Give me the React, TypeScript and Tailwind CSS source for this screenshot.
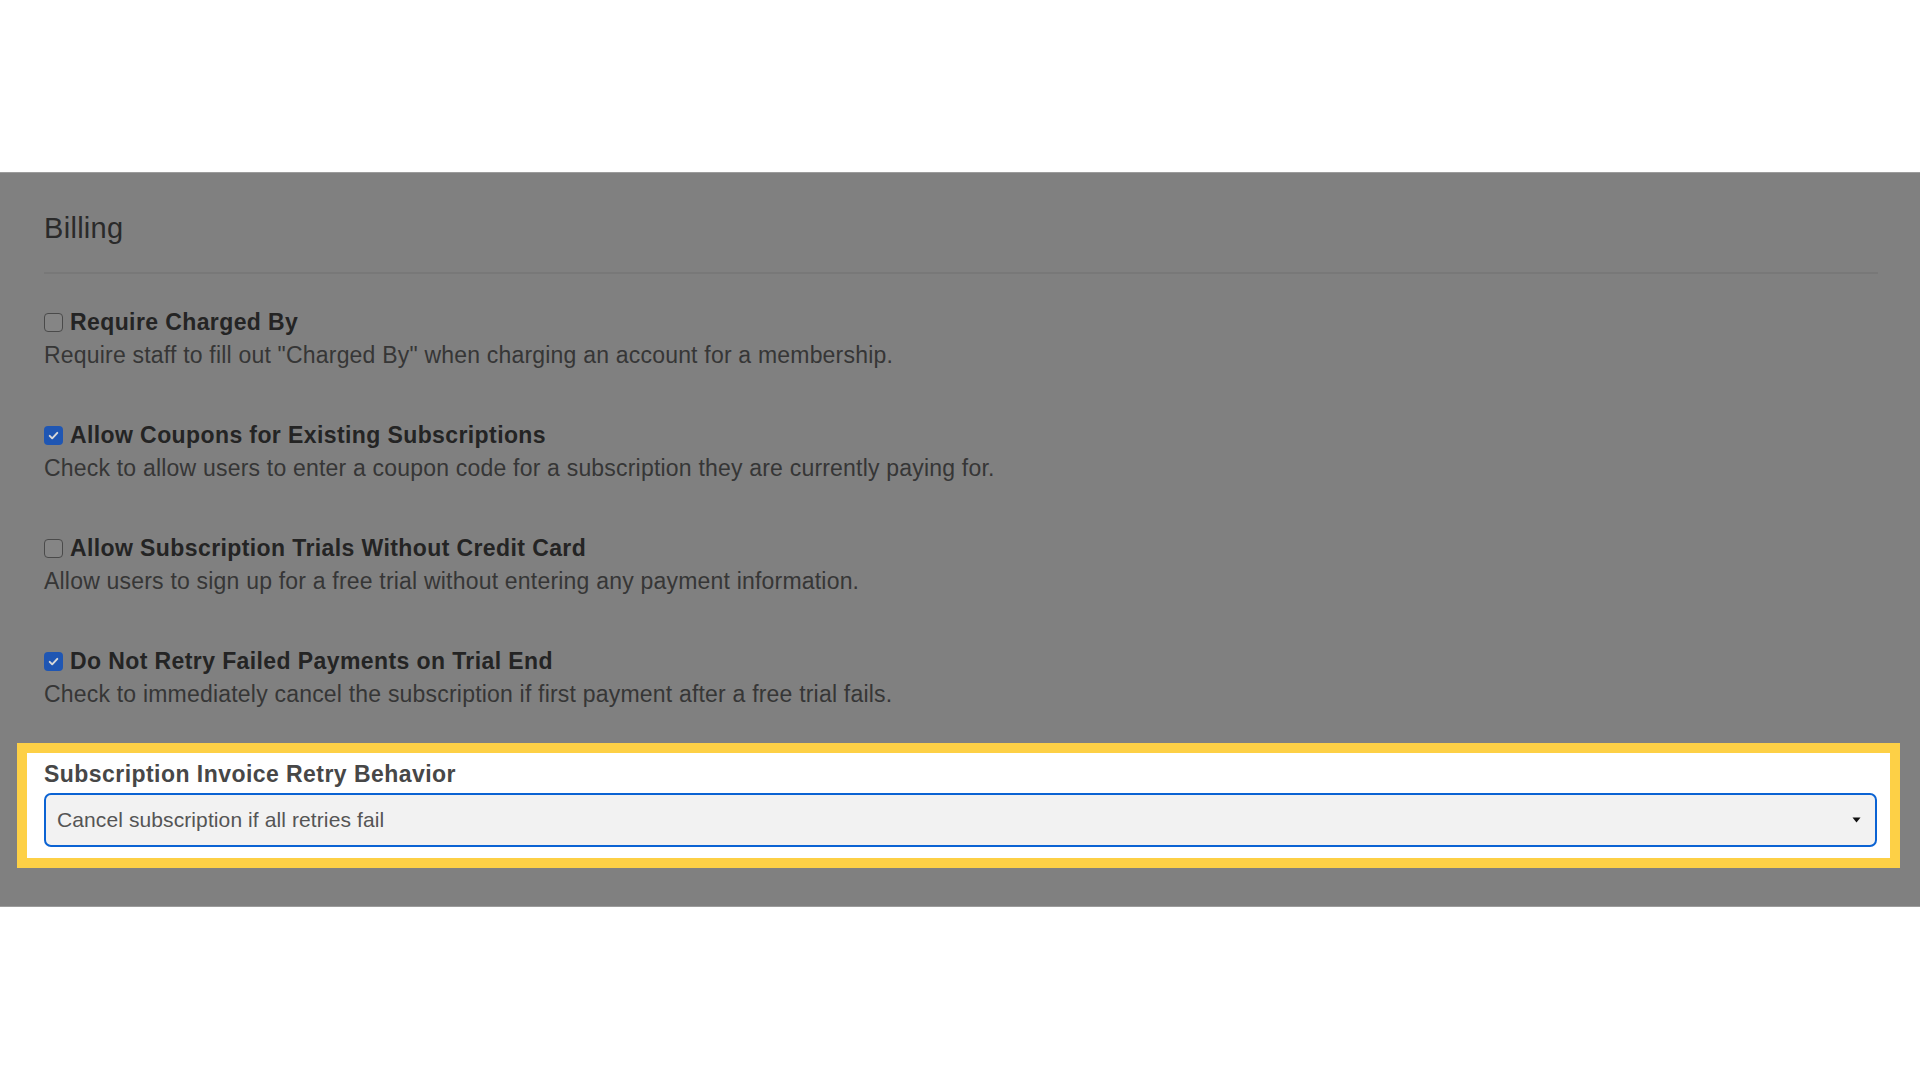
import React from "react";

interface BillingOption {
  title: string;
  desc: string;
  checked: boolean;
}

const options: BillingOption[] = [
  {
    title: "Require Charged By",
    desc: 'Require staff to fill out "Charged By" when charging an account for a membership.',
    checked: false,
  },
  {
    title: "Allow Coupons for Existing Subscriptions",
    desc: "Check to allow users to enter a coupon code for a subscription they are currently paying for.",
    checked: true,
  },
  {
    title: "Allow Subscription Trials Without Credit Card",
    desc: "Allow users to sign up for a free trial without entering any payment information.",
    checked: false,
  },
  {
    title: "Do Not Retry Failed Payments on Trial End",
    desc: "Check to immediately cancel the subscription if first payment after a free trial fails.",
    checked: true,
  },
];

const Checkbox = ({ checked }: { checked: boolean }) =>
  checked ? (
    <span className="w-[19px] h-[19px] rounded-[4px] bg-[#1f56b3] flex items-center justify-center shrink-0">
      <svg width="13" height="13" viewBox="0 0 12 12" fill="none">
        <path d="M2.5 6.3l2.3 2.3 4.7-5" stroke="#d8d8d8" strokeWidth="1.8" strokeLinecap="round" strokeLinejoin="round" />
      </svg>
    </span>
  ) : (
    <span className="w-[19px] h-[19px] rounded-[4px] border-[1.5px] border-[#4a4a4a] bg-[#858585] shrink-0" />
  );

export default function App() {
  return (
    <div className="min-h-screen w-full bg-white font-['Liberation_Sans',Arial,sans-serif]">
      <div className="h-[172px]" />

      {/* dimmed settings panel */}
      <section className="bg-[#808080] border-y border-[#9c9c9c] pl-[44px] pr-[42px] pt-[39px] pb-[38px]">
        <h2 className="text-[29px] leading-[32px] tracking-[0.3px] text-[#2a2a2a]">Billing</h2>
        <div className="mt-[28px] h-[2px] bg-[#787878]" />

        <div className="mt-[32px] flex flex-col gap-[47px]">
          {options.map((opt) => (
            <div key={opt.title} className="flex flex-col">
              <div className="flex items-center gap-[7px] h-[33px]">
                <Checkbox checked={opt.checked} />
                <span className="text-[23px] leading-[33px] tracking-[0.4px] font-bold text-[#242424]">
                  {opt.title}
                </span>
              </div>
              <p className="text-[23px] leading-[33px] tracking-[0.2px] text-[#363636]">{opt.desc}</p>
            </div>
          ))}
        </div>

        {/* highlighted field */}
        <div className="mt-[32px] ml-[-27px] mr-[-22px] border-[10px] border-[#fdd046] bg-white pl-[17px] pr-[13px] pt-[8px] pb-[11px]">
          <label className="block text-[23px] leading-[26px] tracking-[0.45px] font-bold text-[#474747]">
            Subscription Invoice Retry Behavior
          </label>
          <div className="mt-[6px] h-[54px] rounded-[7px] border-2 border-[#0b63d3] bg-[#f2f2f2] flex items-center justify-between pl-[11px] pr-[14px]">
            <span className="text-[21px] tracking-[0.1px] text-[#555]">Cancel subscription if all retries fail</span>
            <svg width="9" height="6" viewBox="0 0 9 6">
              <path d="M0.5 0.5h8L4.5 5.5z" fill="#111" />
            </svg>
          </div>
        </div>
      </section>
    </div>
  );
}
